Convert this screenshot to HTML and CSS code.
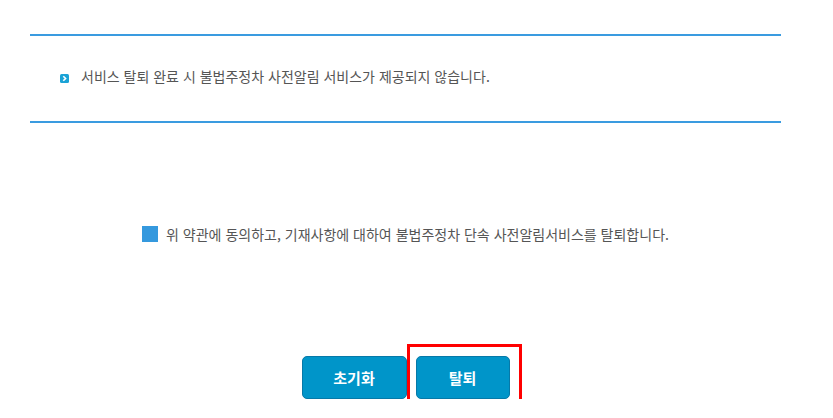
FILE: index.html
```html
<!DOCTYPE html>
<html lang="ko">
<head>
<meta charset="utf-8">
<link rel="stylesheet" href="styles.css">
</head>
<body>
<div class="wrap">
  <div class="notice">
    <span class="bullet"><svg width="9" height="9" viewBox="0 0 9 9"><rect width="9" height="9" rx="1.5" fill="#1ba3d6"/><path d="M3.3 2.2 L5.6 4.5 L3.3 6.8" fill="none" stroke="#fff" stroke-width="1.6"/></svg></span>
    <span class="notice-text">서비스 탈퇴 완료 시 불법주정차 사전알림 서비스가 제공되지 않습니다.</span>
  </div>
  <div class="agree">
    <span class="check"></span>
    <span class="agree-text">위 약관에 동의하고, 기재사항에 대하여 불법주정차 단속 사전알림서비스를 탈퇴합니다.</span>
  </div>
  <div class="buttons">
    <button class="btn">초기화</button>
    <span class="highlight"><button class="btn btn-narrow">탈퇴</button></span>
  </div>
</div>
</body>
</html>
```
FILE: styles.css
```css
html, body {
  margin: 0;
  padding: 0;
  background: #fff;
}
body {
  font-family: "Noto Sans CJK KR", "Noto Sans", sans-serif;
  color: #555;
}
.wrap {
  width: 751px;
  margin-left: 30px;
  padding-top: 34px;
}
.notice {
  border-top: 2px solid #3a9be0;
  border-bottom: 2px solid #3a9be0;
  padding: 32px 0 36px 30px;
  display: flex;
  align-items: center;
  height: 17px;
}
.bullet {
  display: flex;
  width: 9px;
  height: 9px;
  margin-right: 12px;
  margin-top: 4px;
}
.notice-text {
  font-size: 14px;
  line-height: 17px;
  color: #555;
}
.agree {
  margin-top: 103px;
  display: flex;
  justify-content: center;
  align-items: center;
  height: 16px;
}
.check {
  width: 16px;
  height: 16px;
  background: #3599de;
  margin-right: 8px;
}
.agree-text {
  font-size: 14px;
  line-height: 17px;
  color: #555;
}
.buttons {
  margin-top: 114px;
  display: flex;
  justify-content: center;
  gap: 9px;
}
.btn {
  width: 105px;
  height: 43px;
  background: #0095c9;
  border: 1px solid #0679a8;
  border-radius: 5px;
  color: #fff;
  font-family: "Noto Sans CJK KR", "Noto Sans", sans-serif;
  font-weight: 700;
  font-size: 15px;
  padding: 0;
}
.btn-narrow {
  width: 94px;
}
.highlight {
  position: relative;
  display: flex;
}
.highlight::after {
  content: "";
  position: absolute;
  left: -9px;
  top: -12px;
  right: -12px;
  bottom: -11px;
  border: 3px solid #f00;
  pointer-events: none;
}
```
